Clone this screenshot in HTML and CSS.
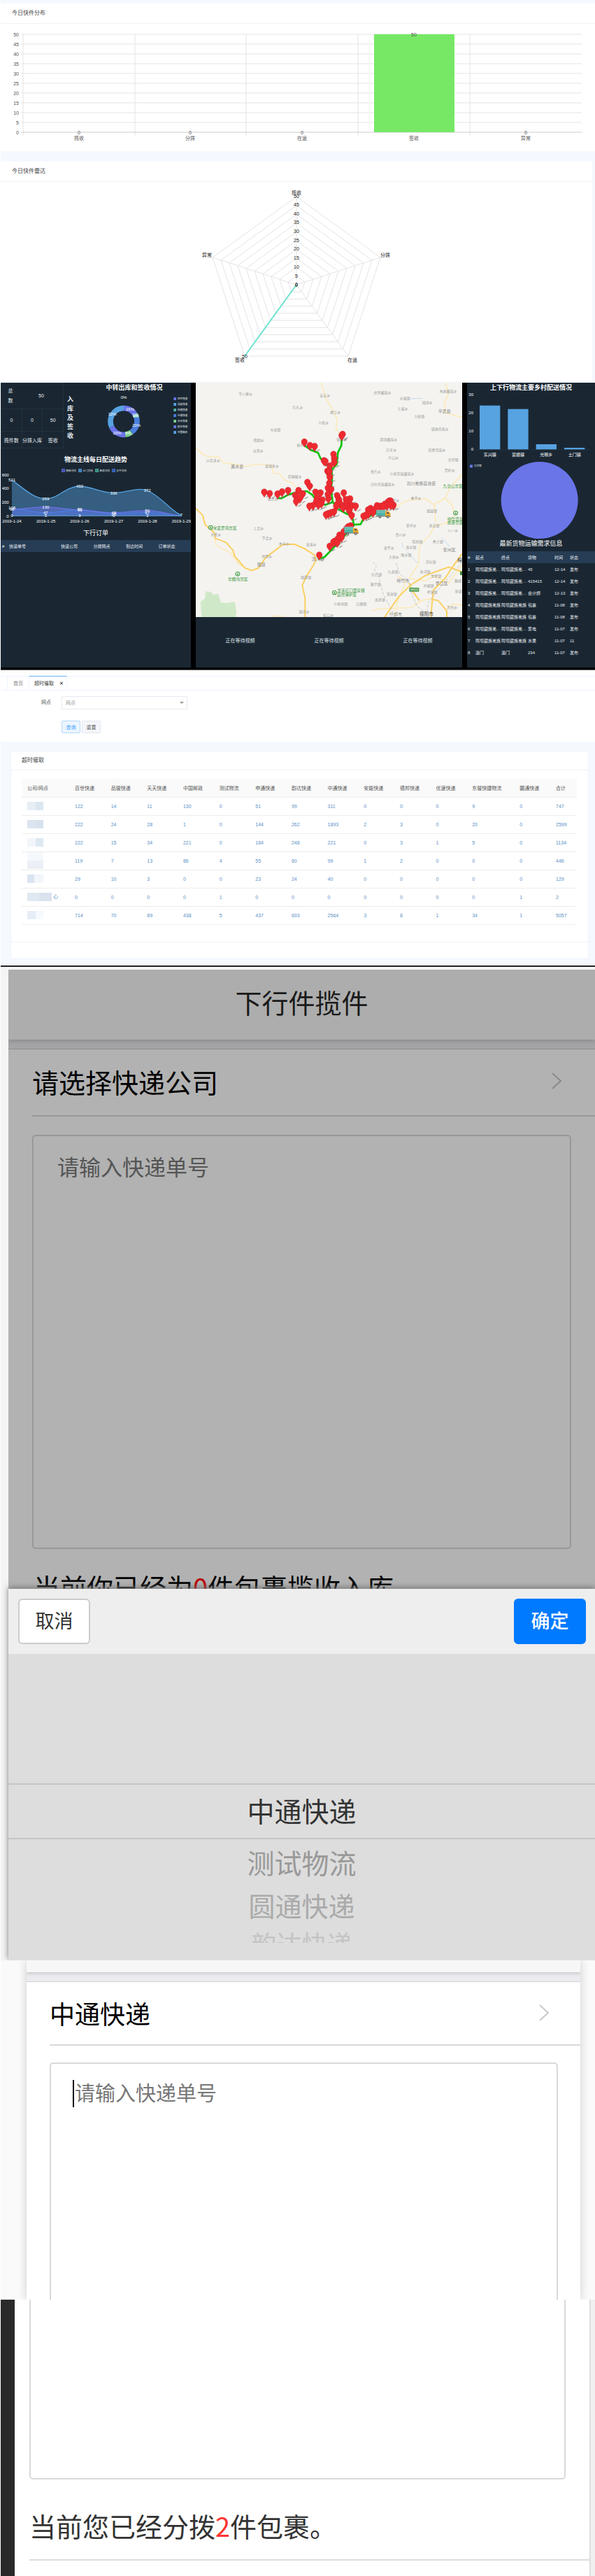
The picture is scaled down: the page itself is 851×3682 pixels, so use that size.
FILE: index.html
```html
<!DOCTYPE html>
<html lang="zh-CN">
  <head>
    <meta charset="UTF-8" />
    <meta name="viewport" content="width=device-width, initial-scale=1.0" />
    <title>物流管理</title>
    <link rel="stylesheet" href="styles.css">
  </head>
  <body>
    <!-- today's parcels -->
    <section class="today">
      <div class="card">
        <h3 class="card-title">今日快件分布</h3>
        <svg class="chart" viewBox="1 34 850 182">
          <path class="grid" d="M30 49H832M30 63H832M30 77H832M30 91H832M30 105H832M30 119H832M30 133H832M30 147H832M30 161H832M30 175H832" />
          <path class="grid" d="M33 49V194M193 49V194M352 49V194M512 49V194M672 49V194" />
          <path class="axis" d="M30 189H832" />
          <rect x="535" y="49" width="115" height="140" fill="#76e866" />
          <g class="tick end">
            <text x="27" y="52">50</text><text x="27" y="66">45</text><text x="27" y="80">40</text>
            <text x="27" y="94">35</text><text x="27" y="108">30</text><text x="27" y="122">25</text>
            <text x="27" y="136">20</text><text x="27" y="150">15</text><text x="27" y="164">10</text>
            <text x="27" y="178">5</text><text x="27" y="192">0</text>
          </g>
          <g class="tick mid">
            <text x="113" y="192">0</text><text x="272" y="192">0</text><text x="432" y="192">0</text>
            <text x="592" y="52">50</text><text x="752" y="192">0</text>
            <text x="113" y="200">揽收</text><text x="272" y="200">分拨</text><text x="432" y="200">在途</text>
            <text x="592" y="200">签收</text><text x="752" y="200">异常</text>
          </g>
        </svg>
      </div>
      <div class="card radar-card">
        <h3 class="card-title">今日快件雷达</h3>
        <svg class="chart" viewBox="1 260 846 285">
          <defs>
            <path id="ring" class="grid" vector-effect="non-scaling-stroke" d="M0 -126L120 -39L74 102H-74L-120 -39Z" />
          </defs>
          <g transform="translate(424 407)">
            <use href="#ring" /><use href="#ring" transform="scale(.9)" /><use href="#ring" transform="scale(.8)" />
            <use href="#ring" transform="scale(.7)" /><use href="#ring" transform="scale(.6)" /><use href="#ring" transform="scale(.5)" />
            <use href="#ring" transform="scale(.4)" /><use href="#ring" transform="scale(.3)" /><use href="#ring" transform="scale(.2)" />
            <use href="#ring" transform="scale(.1)" />
            <path class="grid" d="M0 0V-126M0 0L120 -39M0 0L74 102M0 0L-74 102M0 0L-120 -39" />
            <path d="M0 0L-74 102" stroke="#6be3d0" stroke-width="2" />
          </g>
          <g class="tick mid dark">
            <text x="424" y="278">揽收</text><text x="424" y="283">50</text><text x="424" y="295">45</text>
            <text x="424" y="308">40</text><text x="424" y="320">35</text><text x="424" y="333">30</text>
            <text x="424" y="346">25</text><text x="424" y="358">20</text><text x="424" y="371">15</text>
            <text x="424" y="384">10</text><text x="424" y="397">5</text><text x="424" y="410">0</text>
            <text x="424" y="409">0</text><text x="350" y="512">50</text>
            <text x="296" y="367">异常</text><text x="551" y="367">分拨</text>
            <text x="504" y="517">在途</text><text x="343" y="517">签收</text>
          </g>
        </svg>
      </div>
    </section>

    <!-- big screen -->
    <section class="screen">
      <div class="panel">
        <div class="summary">
          <table class="stats">
            <tr class="stats-total"><td colspan="3"><div class="total"><span>总<br>数</span><b>50</b></div></td></tr>
            <tr class="stats-count"><td>0</td><td>0</td><td>50</td></tr>
            <tr class="stats-name"><td>揽件数</td><td>分拨入库</td><td>签收</td></tr>
          </table>
          <div class="side-title">入库及签收</div>
          <div class="donut">
            <h4 class="screen-title">中转出库和签收情况</h4>
            <svg class="chart" viewBox="333 63 486 237">
              <g fill="none" stroke-width="23" transform="rotate(-90 531 187)">
                <circle cx="531" cy="187" r="57" pathLength="100" stroke="#6a73e8" stroke-dasharray="16 84" />
                <circle cx="531" cy="187" r="57" pathLength="100" stroke="#5cc5b4" stroke-dasharray="4 96" stroke-dashoffset="-16" />
                <circle cx="531" cy="187" r="57" pathLength="100" stroke="#4a7fe0" stroke-dasharray="20 80" stroke-dashoffset="-20" />
                <circle cx="531" cy="187" r="57" pathLength="100" stroke="#7bd08c" stroke-dasharray="8 92" stroke-dashoffset="-40" />
                <circle cx="531" cy="187" r="57" pathLength="100" stroke="#6a73e8" stroke-dasharray="20 80" stroke-dashoffset="-48" />
                <circle cx="531" cy="187" r="57" pathLength="100" stroke="#57a2e0" stroke-dasharray="32 68" stroke-dashoffset="-68" />
              </g>
              <g class="light mid">
                <text x="531" y="90">0%</text><text x="558" y="142">16%</text><text x="582" y="164">0%</text><text x="582" y="170">4%</text>
                <text x="585" y="210">20%</text><text x="550" y="244">8%</text><text x="503" y="242">20%</text><text x="482" y="162">32%</text>
              </g>
              <g fill="#6a73e8"><rect x="745" y="84" width="11" height="12" /><rect x="745" y="204" width="11" height="12" /></g>
              <g fill="#57a2e0"><rect x="745" y="108" width="11" height="12" /><rect x="745" y="228" width="11" height="12" /></g>
              <rect x="745" y="132" width="11" height="12" fill="#4fb5a4" />
              <rect x="745" y="156" width="11" height="12" fill="#4a7fe0" />
              <rect x="745" y="180" width="11" height="12" fill="#7bd08c" />
              <g class="legend">
                <text x="761" y="94">百世快递</text><text x="761" y="118">品骏快递</text><text x="761" y="142">申通快递</text>
                <text x="761" y="166">中通快递</text><text x="761" y="190">天天快递</text><text x="761" y="214">韵达快递</text>
                <text x="761" y="238">中国邮政</text>
              </g>
            </svg>
          </div>
        </div>
        <h4 class="screen-title trend-title">物流主线每日配送趋势</h4>
        <svg class="chart" viewBox="3 369 816 258">
          <g stroke-width="2">
            <rect x="266" y="388" width="12" height="13" fill="#4a50b8" stroke="#6a73e8" />
            <rect x="338" y="388" width="12" height="13" fill="#3f7fb8" stroke="#57a2e0" />
            <rect x="410" y="388" width="12" height="13" fill="#37877a" stroke="#5cc5b4" />
            <rect x="482" y="388" width="12" height="13" fill="#2f5cb0" stroke="#4a7fe0" />
          </g>
          <g class="legend">
            <text x="283" y="399">南新方向</text><text x="355" y="399">土门方向</text>
            <text x="427" y="399">黑虎方向</text><text x="499" y="399">太平方向</text>
          </g>
          <path fill="#57a2e0" fill-opacity=".45" d="M51 435C110 480 150 516 196 516C250 516 280 463 342 462C390 462 440 492 488 491C540 490 590 465 632 480C690 505 730 565 778 589H51Z" />
          <path fill="#6a73e8" fill-opacity=".5" d="M51 561C100 560 150 550 196 551C250 552 290 563 342 564C390 565 440 577 488 576C540 575 590 566 632 566C690 567 730 585 778 589H51Z" />
          <path fill="#4a7fe0" fill-opacity=".35" d="M51 556C100 560 150 576 196 576C250 575 290 563 342 563C390 563 440 581 488 581C540 580 590 574 632 575C690 577 730 588 778 589H51Z" />
          <g fill="none" stroke-width="4">
            <path stroke="#57a2e0" d="M51 435C110 480 150 516 196 516C250 516 280 463 342 462C390 462 440 492 488 491C540 490 590 465 632 480C690 505 730 565 778 587" />
            <path stroke="#4a7fe0" d="M51 556C100 560 150 576 196 576C250 575 290 563 342 563C390 563 440 581 488 581C540 580 590 574 632 575C690 577 730 588 778 589" />
            <path stroke="#6a73e8" d="M51 561C100 560 150 550 196 551C250 552 290 563 342 564C390 565 440 577 488 576C540 575 590 566 632 566C690 567 730 585 778 589" />
            <path stroke="#5a9fc8" stroke-width="3" d="M51 589H778" />
          </g>
          <g class="light end">
            <text x="38" y="419">600</text><text x="38" y="478">400</text><text x="38" y="537">200</text><text x="38" y="596">0</text>
          </g>
          <g class="light mid">
            <text x="51" y="442">521</text><text x="196" y="521">253</text><text x="342" y="467">432</text><text x="488" y="497">336</text><text x="632" y="486">372</text>
            <text x="51" y="562">108</text><text x="51" y="568">98</text><text x="196" y="557">130</text><text x="196" y="582">47</text><text x="342" y="568">83</text><text x="342" y="571">90</text>
            <text x="488" y="582">48</text><text x="488" y="587">28</text><text x="632" y="572">80</text><text x="632" y="581">47</text>
            <text x="51" y="595">0</text><text x="196" y="594">5</text><text x="342" y="593">9</text><text x="488" y="595">0</text><text x="632" y="594">3</text><text x="778" y="592">7</text>
            <text x="51" y="618">2019-1-24</text><text x="197" y="618">2019-1-25</text><text x="342" y="618">2019-1-26</text>
            <text x="488" y="618">2019-1-27</text><text x="633" y="618">2019-1-28</text><text x="778" y="618">2019-1-29</text>
          </g>
        </svg>
        <h4 class="screen-title order-title">下行订单</h4>
        <table class="screen-table order-table">
          <tr><th>#</th><th>快递单号</th><th>快递公司</th><th>分拨网点</th><th>到达时间</th><th>订单状态</th></tr>
        </table>
      </div>

      <div class="middle">
        <svg class="chart map" viewBox="15 21 1143 1006">
          <defs>
            <g id="pin">
              <path d="M3 22L18 13L26 13L14 22Z" fill="#666" opacity=".45" />
              <path d="M0 23C-3 14 -13 9 -13 -1A13 13 0 0 1 13 -1C13 9 3 14 0 23Z" fill="#ee2a30" stroke="#b81e26" stroke-width="1" />
            </g>
            <g id="truck">
              <rect x="0" y="0" width="38" height="25" fill="#4fb3a5" />
              <path d="M0 8H38M0 0H38" stroke="#8fd0c8" stroke-width="3" />
              <path d="M38 4H52L61 14V29H38Z" fill="#f0ac2e" />
              <path d="M44 8H51L57 15H44Z" fill="#5a5a50" />
              <path d="M0 26H60" stroke="#777" stroke-width="3" />
              <circle cx="15" cy="28" r="6" fill="#555" /><circle cx="49" cy="28" r="6" fill="#555" />
              <circle cx="15" cy="28" r="3" fill="#ccc" /><circle cx="49" cy="28" r="3" fill="#ccc" />
            </g>
            <g id="park">
              <circle r="10" fill="#3a9a42" /><circle r="7" fill="#f4f3ef" />
              <path d="M-4 4L0 -5L4 4Z" fill="#3a9a42" />
            </g>
          </defs>
          <rect x="15" y="21" width="1143" height="1006" fill="#f4f3ef" />
          <path fill="#cfe9c8" d="M57 916L80 918L90 930L112 927L118 948L124 964L150 966L182 960L190 1000L186 1027H40L35 962L55 945Z" />
          <g fill="none" stroke="#ffe8b0" stroke-width="4">
            <path d="M552 21L572 85L610 150L622 180L616 215L635 245" />
            <path d="M15 300L45 328L75 340L110 338L135 365L180 370L225 380L285 370L340 375L350 410L375 412L400 440L430 452L450 475" />
            <path d="M1088 21L1098 70L1082 110L1085 150L1158 170" />
            <path d="M865 560L905 535L940 522L1000 518L1038 545L1085 515L1110 465L1158 415" />
            <path d="M1085 515L1115 545L1125 590L1100 620L1040 635L1015 680L975 720L970 800L930 860" />
            <path d="M700 640L735 595" /><path d="M1038 545L1045 620" />
            <path d="M775 1000L800 990L870 988L940 985L985 955L1030 945" />
            <path d="M870 1027L880 960L905 900L915 870L880 850M930 860L1000 870L1040 850L1100 880L1158 800" />
            <path d="M97 688L100 715L130 735L165 750L200 800L245 823" />
            <path d="M345 1022L400 1022M1090 990L1120 970L1158 975" />
          </g>
          <g fill="none" stroke="#fbd062" stroke-width="6">
            <path d="M15 560L45 590L55 630L95 665L98 688L145 706L175 740L182 765L225 815L255 826L285 815L315 770L345 748L390 714L440 714L480 732L525 760L530 785L510 820L490 850L472 890L484 945L484 1027" />
            <path d="M825 1027L885 940L935 890L1000 848L1100 812L1158 832" />
            <path d="M1158 755L1110 820L1085 860L1035 910L1028 975L1024 1027" />
            <path d="M930 880L945 915L975 955M1028 950L1055 955L1092 1000L1092 1027" />
          </g>
          <path d="M775 790L790 805L782 825L800 850L820 930L845 975L870 1027M875 795L890 840L935 880L940 925L965 980L1005 1010L1015 960L1080 880L1158 790" fill="none" stroke="#c8c8c8" stroke-width="3" stroke-dasharray="12 6" />
          <path d="M900 708L905 730M920 745L968 795M1070 685L1105 725M935 90L990 88" fill="none" stroke="#c3daf2" stroke-width="3" />
          <g class="place mid">
            <text x="228" y="74">下八寨乡</text><text x="569" y="82">安宏乡</text><text x="816" y="70">虎牙藏族乡</text><text x="1098" y="64">木座藏族乡</text>
            <text x="912" y="93">水晶镇</text><text x="1009" y="110">阔达乡</text><text x="453" y="131">红扎乡</text><text x="614" y="154">岷江乡</text>
            <text x="903" y="138">土城乡</text><text x="974" y="171">大桥镇</text><text x="563" y="197">小姓乡</text><text x="356" y="228">卡龙镇</text>
            <text x="1063" y="225">锁塘羌族乡</text><text x="285" y="272">晴朗乡</text><text x="842" y="269">泗洱藏族乡</text><text x="642" y="270">镇坪乡</text>
            <text x="283" y="317">瓜里乡</text><text x="854" y="315">白羊乡</text><text x="1050" y="316">旧堡羌族乡</text><text x="471" y="295">松坪沟</text>
            <text x="90" y="359">沙石多乡</text><text x="342" y="383">双溜索乡</text><text x="863" y="349">片口乡</text><text x="1120" y="357">豆叩镇</text>
            <text x="440" y="430">石碉楼乡</text><text x="787" y="409">青片乡</text><text x="900" y="416">小坝羌族藏族乡</text><text x="1105" y="402">贯岭乡</text>
            <text x="817" y="463">白什羌族藏族乡</text><text x="346" y="524">维古乡</text><text x="866" y="530">禹里乡</text><text x="960" y="522">香平乡</text>
            <text x="1028" y="577">擂鼓镇</text><text x="940" y="639">茶坪乡</text><text x="1038" y="638">永安镇</text><text x="284" y="651">上孟乡</text>
            <text x="1118" y="659">八一乡</text><text x="101" y="678">夹壁乡</text><text x="321" y="692">下孟乡</text><text x="894" y="678">青川乡</text>
            <text x="394" y="718">木卡乡</text><text x="511" y="721">龙溪乡</text><text x="966" y="707">晓坝镇</text><text x="1054" y="707">秀士镇</text>
            <text x="938" y="732">清水镇</text><text x="844" y="736">清平乡</text><text x="918" y="766">睢水镇</text><text x="320" y="772">甘堡乡</text>
            <text x="865" y="774">大池乡</text><text x="1023" y="794">河水镇</text><text x="791" y="850">红白镇</text><text x="861" y="838">九龙镇</text>
            <text x="999" y="836">永河镇</text><text x="1046" y="854">文星镇</text><text x="488" y="860">绵虒镇</text><text x="786" y="891">蓥华镇</text>
            <text x="1014" y="898">齐福镇</text><text x="1140" y="875">魏城</text><text x="856" y="932">玉泉镇</text><text x="1029" y="923">孝泉镇</text>
            <text x="805" y="958">洛氏镇</text><text x="1142" y="921">新盛</text><text x="637" y="976">小鱼洞镇</text><text x="725" y="974">白鹿镇</text>
            <text x="480" y="1007">银杏乡</text><text x="584" y="1024">虹口乡</text><text x="1115" y="990">万古乡</text>
          </g>
          <g class="place county mid">
            <text x="193" y="386">黑水县</text><text x="1082" y="151">平武县</text><text x="982" y="458">北川羌族自治县</text><text x="539" y="782">汶川县</text>
            <text x="296" y="808">理县</text><text x="1103" y="744">安州区</text><text x="904" y="876">绵竹市</text><text x="1070" y="888">罗江区</text><text x="873" y="1019">什邡市</text>
          </g>
          <g class="place city mid"><text x="1005" y="1020">德阳市</text><text x="1148" y="790">绵</text></g>
          <g class="place scenic mid">
            <text x="140" y="650">米亚罗风景区</text><text x="196" y="869">毕棚沟景区</text><text x="1118" y="472">九皇山景区</text>
            <text x="1128" y="611">中华温泉</text><text x="1128" y="628">旅游景区</text>
            <text x="681" y="919">龙溪虹口国家级</text><text x="663" y="936">自然保护区</text>
          </g>
          <use href="#park" x="79" y="642" /><use href="#park" x="195" y="841" /><use href="#park" x="610" y="921" /><use href="#park" x="1130" y="580" />
          <rect x="931" y="900" width="42" height="17" fill="#4f9a50" /><text class="road mid" x="952" y="913">G5011</text>
          <rect x="1149" y="830" width="9" height="16" fill="#3f8a40" />
          <g fill="none" stroke="#0bc20b" stroke-width="8" stroke-linejoin="round">
            <path d="M481 290L510 310L540 322L550 345L575 372L598 390L600 430L596 480L602 530L620 560L660 582L685 592L694 632L655 675L605 730L568 768L540 777" />
            <path d="M641 260L640 290L625 320L620 370L598 395" />
            <path d="M366 515L382 517L415 500L450 490L492 486L515 502L540 535L570 545L602 533" />
            <path d="M694 630L722 628L735 605L780 585L850 545" />
          </g>
          <g id="pins"></g>
          <use href="#truck" x="790" y="568" /><use href="#truck" x="652" y="640" />
        </svg>
        <div class="videos">
          <span>正在等待视频</span><span>正在等待视频</span><span>正在等待视频</span>
        </div>
      </div>

      <div class="panel">
        <h4 class="screen-title">上下行物流主要乡村配送情况</h4>
        <svg class="chart" viewBox="39 63 549 627">
          <g fill="#57a2e0">
            <rect x="93" y="119" width="88" height="189" /><rect x="214" y="134" width="88" height="174" />
            <rect x="335" y="285" width="88" height="23" /><rect x="456" y="300" width="88" height="8" />
          </g>
          <path d="M75 308H563" stroke="#2b3a49" stroke-width="2" />
          <g class="light end"><text x="66" y="77">30</text><text x="66" y="155">20</text><text x="66" y="235">10</text><text x="66" y="313">0</text></g>
          <g class="light mid"><text x="137" y="336">东兴镇</text><text x="258" y="336">富顺镇</text><text x="379" y="336">光明乡</text><text x="500" y="336">土门镇</text></g>
          <circle cx="350" cy="525" r="165" fill="#6a75e8" />
          <rect x="51" y="373" width="12" height="12" fill="#6a75e8" />
          <g class="legend"><text x="68" y="382">大货物</text></g>
        </svg>
        <h4 class="screen-title need-title">最新货物运输需求信息</h4>
        <table class="screen-table need-table">
          <tr><th>#</th><th>起点</th><th>终点</th><th>货物</th><th>时间</th><th>状态</th></tr>
          <tr><td>1</td><td>阿坝藏族羌…</td><td>阿坝藏族羌…</td><td>45</td><td>12-14</td><td>发布</td></tr>
          <tr><td>2</td><td>阿坝藏族羌…</td><td>阿坝藏族羌…</td><td>415415</td><td>12-14</td><td>发布</td></tr>
          <tr><td>3</td><td>阿坝藏族羌…</td><td>阿坝藏族羌…</td><td>会计師</td><td>12-13</td><td>发布</td></tr>
          <tr><td>4</td><td>阿坝藏族羌族</td><td>阿坝藏族羌族</td><td>包裹</td><td>11-08</td><td>发布</td></tr>
          <tr><td>5</td><td>阿坝藏族羌族</td><td>阿坝藏族羌族</td><td>包裹</td><td>11-08</td><td>发布</td></tr>
          <tr><td>6</td><td>阿坝藏族羌…</td><td>阿坝藏族羌…</td><td>家电</td><td>11-07</td><td>发布</td></tr>
          <tr><td>7</td><td>阿坝藏族羌族</td><td>阿坝藏族羌族</td><td>水果</td><td>11-07</td><td>11</td></tr>
          <tr><td>8</td><td>澳门</td><td>澳门</td><td>234</td><td>11-07</td><td>发布</td></tr>
        </table>
      </div>
    </section>

    <!-- overdue pickup -->
    <section class="overdue">
      <nav class="tabs">
        <a class="tab" href="#">首页</a>
        <a class="tab active" href="#">超时催取 <span class="close">✕</span></a>
      </nav>
      <form class="search">
        <label for="site">网点</label>
        <div class="select-box">
          <select id="site"><option>网点</option></select>
        </div>
        <div class="search-buttons">
          <button type="button" class="btn-query">查询</button>
          <button type="reset" class="btn-reset">重置</button>
        </div>
      </form>
      <div class="overdue-body">
        <div class="overdue-card">
          <h3 class="overdue-title">超时催取</h3>
          <div class="table-wrap">
            <table class="data">
              <colgroup>
                <col class="c-name"><col><col><col><col><col><col><col><col><col><col><col><col class="c-wide"><col><col class="c-sum">
              </colgroup>
              <thead>
                <tr><th>公司/网点</th><th>百世快递</th><th>品骏快递</th><th>天天快递</th><th>中国邮政</th><th>测试物流</th><th>申通快递</th><th>韵达快递</th><th>中通快递</th><th>安能快递</th><th>德邦快递</th><th>优速快递</th><th>东骏快捷物流</th><th>圆通快递</th><th>合计</th></tr>
              </thead>
              <tbody>
                <tr><td><i class="mask m1"></i></td><td>122</td><td>14</td><td>11</td><td>130</td><td>0</td><td>51</td><td>99</td><td>311</td><td>0</td><td>0</td><td>0</td><td>9</td><td>0</td><td>747</td></tr>
                <tr><td><i class="mask m2"></i></td><td>222</td><td>24</td><td>28</td><td>1</td><td>0</td><td>144</td><td>262</td><td>1893</td><td>2</td><td>3</td><td>0</td><td>20</td><td>0</td><td>2599</td></tr>
                <tr><td><i class="mask m3"></i></td><td>222</td><td>15</td><td>34</td><td>221</td><td>0</td><td>164</td><td>248</td><td>221</td><td>0</td><td>3</td><td>1</td><td>5</td><td>0</td><td>1134</td></tr>
                <tr><td><i class="mask m4"></i></td><td>119</td><td>7</td><td>13</td><td>86</td><td>4</td><td>55</td><td>60</td><td>99</td><td>1</td><td>2</td><td>0</td><td>0</td><td>0</td><td>446</td></tr>
                <tr><td><i class="mask m5"></i></td><td>29</td><td>10</td><td>3</td><td>0</td><td>0</td><td>23</td><td>24</td><td>40</td><td>0</td><td>0</td><td>0</td><td>0</td><td>0</td><td>129</td></tr>
                <tr><td><i class="mask m6"></i>心</td><td>0</td><td>0</td><td>0</td><td>0</td><td>1</td><td>0</td><td>0</td><td>0</td><td>0</td><td>0</td><td>0</td><td>0</td><td>1</td><td>2</td></tr>
                <tr><td><i class="mask m7"></i></td><td>714</td><td>70</td><td>89</td><td>438</td><td>5</td><td>437</td><td>693</td><td>2564</td><td>3</td><td>8</td><td>1</td><td>34</td><td>1</td><td>5057</td></tr>
              </tbody>
            </table>
          </div>
        </div>
      </div>
    </section>

    <!-- downlink pickup, company picker open -->
    <section class="phone phone-pick">
      <div class="phone-screen">
        <header class="phone-title">下行件揽件</header>
        <div class="strip"></div>
        <a class="cell" href="#">请选择快递公司
          <svg class="arrow" viewBox="0 0 16 26"><path d="M2 2L14 13L2 24" /></svg>
        </a>
        <textarea class="codes" aria-label="快递单号" placeholder="请输入快递单号"></textarea>
        <p class="count">当前你已经为<em>0</em>件包裹揽收入库</p>
      </div>
      <div class="sheet">
        <div class="sheet-bar">
          <button type="button" class="cancel">取消</button>
          <button type="button" class="ok">确定</button>
        </div>
        <ul class="wheel">
          <li class="current">中通快递</li>
          <li class="near">测试物流</li>
          <li class="far">圆通快递</li>
          <li class="edge">韵达快递</li>
        </ul>
      </div>
    </section>

    <!-- company selected -->
    <section class="phone phone-input">
      <div class="phone-page">
        <div class="title-end"></div>
        <div class="strip"></div>
        <a class="cell" href="#">中通快递
          <svg class="arrow" viewBox="0 0 16 26"><path d="M2 2L14 13L2 24" /></svg>
        </a>
        <div class="codes-box">
          <textarea class="codes" aria-label="快递单号" placeholder="请输入快递单号"></textarea>
        </div>
      </div>
    </section>

    <!-- sorted count -->
    <section class="phone phone-done">
      <div class="phone-page">
        <textarea class="codes" aria-label="快递单号"></textarea>
        <p class="count">当前您已经分拨<em>2</em>件包裹。</p>
      </div>
    </section>

    <script>
      // village stations
      const stations = [
        [645,242],[641,248],[481,275],[505,290],[525,294],[606,328],[609,346],[609,362],[565,355],[571,358],
        [590,378],[580,400],[588,402],[590,426],[588,452],[582,473],[596,478],[582,500],[584,518],[494,448],
        [504,464],[309,490],[332,496],[366,498],[385,489],[411,483],[456,483],[442,504],[474,497],[462,516],
        [446,530],[529,490],[550,493],[535,516],[558,524],[532,530],[554,538],[541,544],[518,547],[503,550],
        [650,493],[622,505],[628,520],[630,530],[677,519],[660,522],[672,536],[634,540],[622,542],[660,540],
        [684,548],[701,550],[618,550],[663,550],[648,556],[674,570],[684,590],[608,574],[595,578],[584,582],
        [574,586],[846,528],[851,528],[840,532],[826,542],[863,546],[835,548],[793,548],[808,550],[818,552],
        [852,545],[795,560],[765,560],[755,566],[780,565],[776,576],[756,582],[746,588],[735,593],[680,634],
        [670,638],[662,646],[650,660],[632,674],[640,684],[625,690],[612,700],[606,704],[622,706],[590,722],
        [545,760]
      ];
      document.getElementById("pins").innerHTML = stations
        .map(([x, y]) => `<use href="#pin" x="${x}" y="${y}" />`)
        .join("");
    </script>
  </body>
</html>
```

FILE: styles.css
```css
* {
  box-sizing: border-box;
}

body {
  margin: 0 0 0 1px;
  background: #fff;
  font-family: "Liberation Sans", "Noto Sans CJK SC", sans-serif;
}

h3, h4, p, ul {
  margin: 0;
  padding: 0;
}

a {
  color: inherit;
  text-decoration: none;
}

table {
  border-collapse: collapse;
}

.chart {
  display: block;
  width: 100%;
}

.mid {
  text-anchor: middle;
}

.end {
  text-anchor: end;
}

/* today's parcels */
.today {
  background: #f5f9ff;
  padding: 5px 0 2px;
}

.card {
  background: #fff;
  margin-bottom: 15px;
}

.radar-card {
  margin: 0 4px 0 0;
}

.card-title {
  height: 29px;
  padding-left: 16px;
  border-bottom: 1px solid #f0f2f5;
  font-size: 8px;
  font-weight: normal;
  line-height: 28px;
  color: #444;
}

.grid {
  fill: none;
  stroke: #e4e4e4;
  stroke-width: 1px;
}

.axis {
  stroke: #ccc;
}

.tick {
  font-size: 7px;
  fill: #555;
}

.dark {
  fill: #222;
}

/* big screen */
.screen {
  display: grid;
  grid-template-columns: 272fr 381fr 183fr;
  gap: 7px;
  height: 411px;
  padding-bottom: 3px;
  background: #000;
  border-bottom: 1px solid #555;
}

.panel {
  background: #1a2733;
  color: #e8ecf0;
  overflow: hidden;
}

.screen-title {
  font-size: 9px;
  line-height: 14px;
  text-align: center;
  color: #fff;
}

.summary {
  display: grid;
  grid-template-columns: 90px 20px 1fr;
}

.stats {
  width: 90px;
  table-layout: fixed;
  font-size: 7px;
  text-align: center;
}

.stats td {
  padding: 0;
  border: 1px solid #22313e;
  white-space: nowrap;
}

.stats-total {
  height: 37px;
}

.total {
  display: grid;
  grid-template-columns: 26px 1fr;
  align-items: center;
  line-height: 14px;
}

.total b {
  font-weight: normal;
}

.stats-count {
  height: 32px;
}

.stats-name {
  height: 24px;
}

.side-title {
  padding: 18px 5px 0;
  font-size: 9px;
  font-weight: bold;
  line-height: 13px;
}

.trend-title {
  margin-top: 9px;
}

.order-title,
.need-title {
  font-weight: normal;
}

.order-title {
  margin: 5px 0 3px;
}

.need-title {
  margin-bottom: 4px;
}

.light {
  font-size: 18px;
  fill: #fff;
}

.legend {
  font-size: 11px;
  fill: #e8ecf0;
}

.screen-table {
  width: 100%;
  table-layout: fixed;
  font-size: 6px;
}

.screen-table th {
  height: 17px;
  padding: 0;
  background: #263d55;
  font-weight: normal;
  text-align: left;
}

.screen-table td {
  height: 17px;
  padding: 0;
  white-space: nowrap;
}

.order-table th:nth-child(1) { width: 12px; padding-left: 2px; }
.order-table th:nth-child(2) { width: 74px; }

.need-table th:nth-child(1) { width: 12px; }
.need-table th:nth-child(2) { width: 37px; }
.need-table th:nth-child(3) { width: 38px; }
.need-table th:nth-child(4) { width: 38px; }
.need-table th:nth-child(5) { width: 22px; }
.need-table td:first-child,
.need-table th:first-child { padding-left: 1px; }

.middle {
  display: flex;
  flex-direction: column;
}

.videos {
  flex: 1;
  display: grid;
  grid-template-columns: repeat(3, 1fr);
  align-items: center;
  padding-bottom: 6px;
  background: #1a2733;
  color: #dde2e8;
  font-size: 7px;
  text-align: center;
}

.place {
  font-size: 15px;
  fill: #999;
}

.county {
  font-size: 18px;
  fill: #888;
}

.city {
  font-size: 20px;
  fill: #444;
}

.scenic {
  font-size: 17px;
  fill: #3a9a42;
}

.road {
  font-size: 12px;
  fill: #fff;
}

/* overdue pickup */
.overdue {
  padding-top: 8px;
  border-bottom: 2px solid #222;
  color: #555;
  font-size: 7px;
}

.tabs {
  display: flex;
  height: 21px;
  padding-left: 9px;
  border-top: 1px solid #edf5ff;
  border-bottom: 1px solid #edf5ff;
  line-height: 20px;
}

.tab {
  padding: 0 8px;
  border-left: 1px solid #edf5ff;
  color: #888;
}

.tab.active {
  margin-top: -1px;
  padding: 0 4px 0 7px;
  border-top: 1px solid #6cb0f8;
  border-right: 1px solid #edf5ff;
  color: #444;
}

.close {
  margin-left: 6px;
  color: #111;
}

.search {
  display: grid;
  grid-template-columns: 72px 180px;
  column-gap: 15px;
  row-gap: 16px;
  height: 73px;
  padding-top: 8px;
  align-content: start;
}

.search label {
  text-align: right;
  line-height: 18px;
}

.select-box {
  position: relative;
}

.select-box::after {
  content: "";
  position: absolute;
  right: 5px;
  top: 8px;
  border: 3px solid transparent;
  border-top-color: #999;
}

.select-box select {
  display: block;
  width: 100%;
  height: 19px;
  padding: 0 5px;
  appearance: none;
  border: 1px solid #e6eaf2;
  border-radius: 1px;
  background: #fff;
  color: #999;
  font: inherit;
}

.search-buttons {
  grid-column: 2;
  display: flex;
  gap: 2px;
}

.search-buttons button {
  width: 27px;
  height: 18px;
  padding: 0;
  border: 1px solid #e3e7f0;
  border-radius: 2px;
  background: #f4f6fa;
  color: #666;
  font: inherit;
}

.search-buttons .btn-query {
  border-color: #b3d8ff;
  background: #ecf5ff;
  color: #409eff;
}

.overdue-body {
  padding: 13px 9px 9px 14px;
  background: #f5f9ff;
}

.overdue-card {
  height: 298px;
  border: 1px solid #edf3fb;
  background: #fff;
}

.overdue-title {
  height: 27px;
  padding-left: 15px;
  border-bottom: 1px solid #edf3f8;
  font-size: 8px;
  font-weight: normal;
  line-height: 26px;
  color: #444;
}

.table-wrap {
  height: 246px;
  padding: 12px 16px 0 15px;
  border-bottom: 1px solid #edf3f8;
}

.data {
  width: 100%;
  table-layout: fixed;
}

.data th,
.data td {
  padding: 0 0 0 8px;
  border-bottom: 1px solid #eee;
  text-align: left;
  font-weight: normal;
  white-space: nowrap;
}

.data th {
  height: 26px;
  background: #fafafa;
}

.data td {
  height: 26px;
  color: #5b8fc7;
}

.data .c-name { width: 68px; }
.data .c-wide { width: 68px; }
.data .c-sum { width: 38px; }

.mask {
  display: inline-block;
  width: 23px;
  height: 12px;
  vertical-align: middle;
}

.m1 { background: linear-gradient(90deg, #e8eef6 50%, #dae6f0 50%); }
.m2 { background: linear-gradient(90deg, #dce4f0 50%, #d6e2ee 50%); }
.m3 { background: linear-gradient(90deg, #f2f6fa 50%, #dde9f2 50%); }
.m4 { height: 24px; background: linear-gradient(#f6f9fc 50%, #ecf0f6 50%); }
.m5 { background: linear-gradient(90deg, #dae4f0 45%, #f2f5fa 45%); }
.m6 { width: 35px; margin-right: 2px; background: linear-gradient(90deg, #e0e8f2 50%, #dae2ee 50%); }
.m7 { background: linear-gradient(90deg, #e6edf6 50%, #f6faff 50%); }

/* phone pages */
.phone {
  color: #000;
  font-family: "Noto Sans CJK SC", sans-serif;
  overflow: hidden;
}

.phone-title {
  height: 100px;
  box-shadow: 0 2px 6px #888;
  background: #adadad;
  color: #1a1a1a;
  font-size: 38px;
  line-height: 92px;
  text-align: center;
  position: relative;
}

.strip {
  height: 14px;
  background: #a4a4a7;
  border-bottom: 1px solid #8e8e8e;
}

.cell {
  display: flex;
  align-items: center;
  justify-content: space-between;
}

.arrow {
  width: 16px;
  height: 26px;
  fill: none;
  stroke: #c7c7cc;
  stroke-width: 2px;
}

.codes {
  display: block;
  resize: none;
  border: 2px solid #d9d9d9;
  border-radius: 5px;
  background: transparent;
  font-family: inherit;
  outline: none;
}

.codes::placeholder {
  color: #777;
}

.count em {
  color: #f33;
  font-style: normal;
}

.phone-pick {
  padding: 4px 0 0 11px;
  background: #f4f4f4;
}

.phone-screen {
  height: 885px;
  background: #b2b2b2;
  overflow: hidden;
}

.phone-screen .cell {
  height: 96px;
  margin-left: 34px;
  padding: 0 47px 4px 0;
  border-bottom: 2px solid #9a9a9a;
  font-size: 38px;
}

.phone-screen .arrow {
  stroke: #8b8b8e;
}

.phone-screen .codes {
  width: calc(100% - 68px);
  height: 592px;
  margin: 26px 34px 0;
  padding: 20px 34px;
  border-color: #989898;
  font-size: 31px;
}

.phone-screen .codes::placeholder {
  color: #555;
}

.phone-screen .count {
  margin: 26px 0 0 36px;
  font-size: 38px;
  line-height: 56px;
}

.phone-screen .count em {
  color: #b00;
}

.sheet {
  position: relative;
  background: #ddd;
  box-shadow: 0 -2px 8px #777;
}

.sheet-bar {
  display: flex;
  justify-content: space-between;
  align-items: center;
  height: 93px;
  padding: 0 13px 0 14px;
  background: #eee;
}

.sheet-bar button {
  width: 103px;
  height: 65px;
  padding: 0 0 4px;
  border: 2px solid #ccc;
  border-radius: 6px;
  background: #fff;
  color: #333;
  font-family: inherit;
  font-size: 27px;
}

.sheet-bar .ok {
  border-color: #007aff;
  background: #007aff;
  color: #fff;
  font-weight: 500;
}

.wheel {
  height: 438px;
  padding-top: 185px;
  list-style: none;
  text-align: center;
  font-size: 39px;
  overflow: hidden;
}

.wheel .current {
  height: 80px;
  border-top: 2px solid #c4c4c4;
  border-bottom: 2px solid #c4c4c4;
  line-height: 72px;
  color: #333;
}

.wheel .near {
  height: 66px;
  line-height: 64px;
  color: #999;
}

.wheel .far {
  height: 62px;
  line-height: 56px;
  color: #aaa;
  font-size: 38px;
}

.wheel .edge {
  height: 20px;
  line-height: 40px;
  color: #c4c4c4;
  font-size: 36px;
  overflow: hidden;
}

.phone-input {
  padding: 0 21px 0 37px;
  background: #fafafa;
}

.phone-input .phone-page {
  height: 485px;
  background: #fff;
  box-shadow: 0 0 12px #ccc;
  overflow: hidden;
}

.title-end {
  position: relative;
  height: 17px;
  background: #f7f7f7;
  box-shadow: 0 1px 5px #bbb;
}

.phone-input .strip {
  background: #ebebf0;
  border-color: #d0d0d6;
}

.phone-input .cell {
  height: 91px;
  margin-left: 33px;
  padding: 0 44px 2px 0;
  border-bottom: 2px solid #d9d9d9;
  font-size: 36px;
}

.codes-box {
  position: relative;
  margin: 24px 32px 0 33px;
}

.codes-box .codes {
  width: 100%;
  height: 350px;
  padding: 19px 34px;
  font-size: 29px;
}

/* text cursor */
.codes-box::after {
  content: "";
  position: absolute;
  left: 33px;
  top: 25px;
  width: 2px;
  height: 39px;
  background: #000;
}

.phone-done {
  padding: 0 6px 0 20px;
  background: linear-gradient(90deg, #2a2a2a 20px, #f0f0f0 20px);
}

.phone-done .phone-page {
  height: 395px;
  padding-left: 21px;
  border-right: 2px solid #ddd;
  background: #fff;
}

.phone-done .codes {
  width: calc(100% - 34px);
  height: 257px;
  border-top: 0;
  border-radius: 0 0 5px 5px;
}

.phone-done .count {
  height: 116px;
  border-bottom: 2px solid #ddd;
  color: #333;
  font-size: 38px;
  line-height: 132px;
}
```
